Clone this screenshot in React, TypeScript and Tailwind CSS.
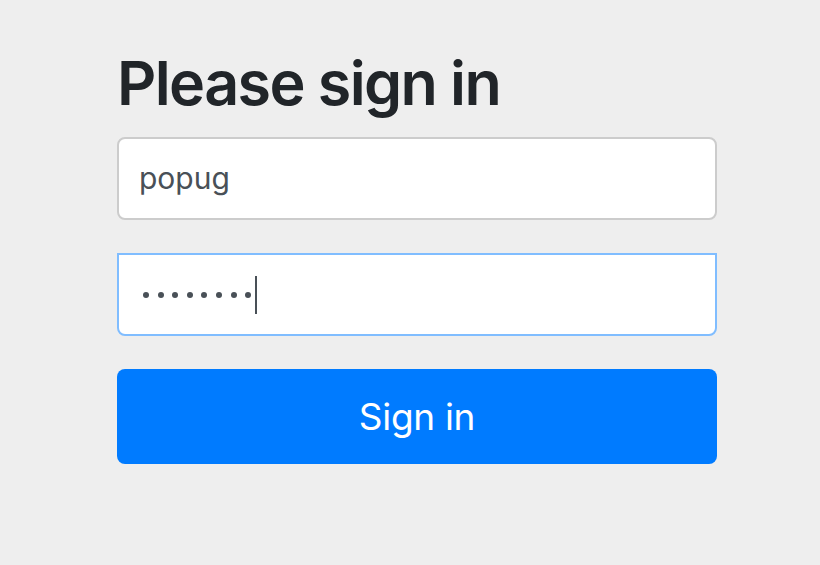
export default function App() {
    return (
        <div className="min-h-screen bg-[#eeeeee] font-['Inter',sans-serif]">
            <form className="ml-[117px] w-[600px] pt-[47px]">
                <h1 className="text-[61px] font-semibold leading-[1.2] tracking-[-1.6px] text-[#212529]">
                    Please sign in
                </h1>
                <div className="mt-[17px] flex h-[83px] items-center rounded-[8px] border-2 border-[#cccccc] bg-white px-[20px] text-[30px] text-[#495057]">
                    popug
                </div>
                <div className="mt-[33px] flex h-[83px] items-center rounded-b-[8px] border-2 border-[#80bdff] bg-white pl-[24px]">
                    <div className="flex items-center gap-[8.6px]">
                        {Array.from({ length: 8 }).map((_, i) => (
                            <span
                                key={i}
                                className="h-[6px] w-[6px] rounded-full bg-[#495057]"
                            />
                        ))}
                    </div>
                    <span className="ml-[4px] h-[38px] w-[2px] bg-[#495057]" />
                </div>
                <button
                    type="button"
                    className="mt-[33px] flex h-[95px] w-full items-center justify-center rounded-[8px] bg-[#007bff] text-[37px] tracking-[-0.3px] text-white"
                >
                    Sign in
                </button>
            </form>
        </div>
    );
}
